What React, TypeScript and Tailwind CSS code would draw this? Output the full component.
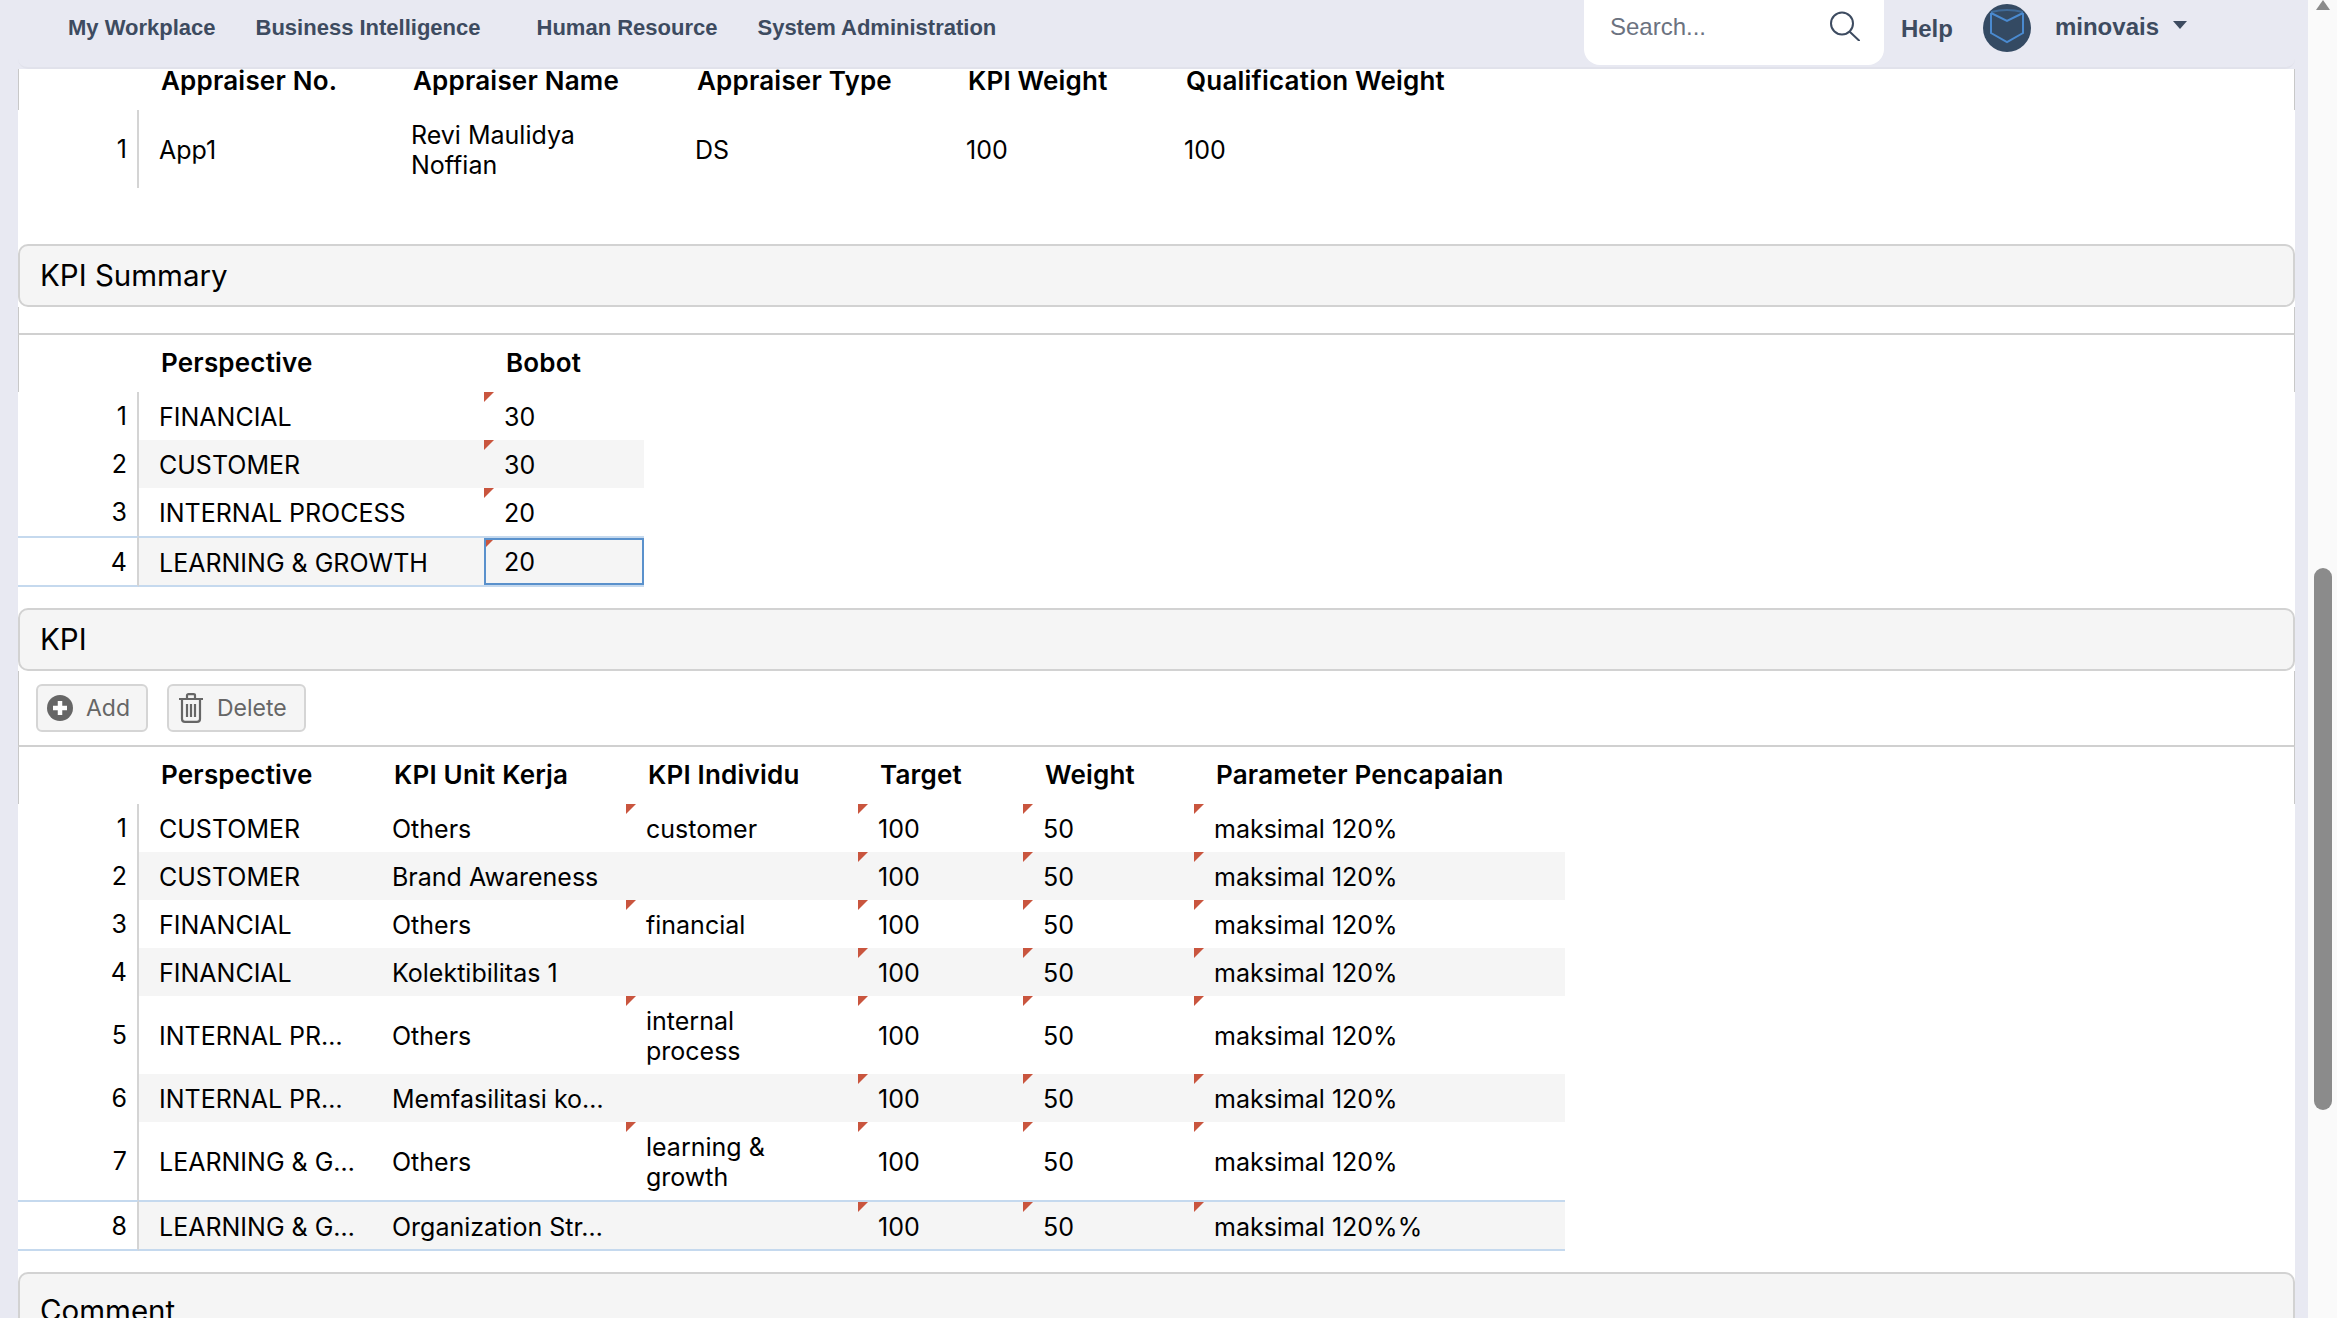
import clsx from "clsx";
import type { ReactNode } from "react";

const NAV = [
  { label: "My Workplace", gap: "ml-[50px]" },
  { label: "Business Intelligence", gap: "ml-[40px]" },
  { label: "Human Resource", gap: "ml-[56px]" },
  { label: "System Administration", gap: "ml-[40px]" },
];

const SUMMARY = [
  ["FINANCIAL", "30"],
  ["CUSTOMER", "30"],
  ["INTERNAL PROCESS", "20"],
  ["LEARNING & GROWTH", "20"],
];

const KPI = [
  ["CUSTOMER", "Others", "customer"],
  ["CUSTOMER", "Brand Awareness", ""],
  ["FINANCIAL", "Others", "financial"],
  ["FINANCIAL", "Kolektibilitas 1", ""],
  ["INTERNAL PR…", "Others", "internal process"],
  ["INTERNAL PR…", "Memfasilitasi ko…", ""],
  ["LEARNING & G…", "Others", "learning & growth"],
  ["LEARNING & G…", "Organization Str…", ""],
];

function Flag() {
  return (
    <span className="absolute left-0 top-0 h-0 w-0 border-r-[10px] border-t-[10px] border-r-transparent border-t-[#c9553e]" />
  );
}

function Bar({ title, className }: { title: string; className?: string }) {
  return (
    <div
      className={clsx(
        "flex h-[63px] items-center rounded-[10px] border-2 border-[#d2d2d2] bg-[#f5f5f5] pl-[20px] text-[29.5px] text-black",
        className,
      )}
    >
      {title}
    </div>
  );
}

function Th({ children, className }: { children?: ReactNode; className?: string }) {
  return (
    <th className={clsx("pb-[2px] pl-[22px] text-left text-[26px] font-semibold tracking-[0.2px] text-black", className)}>
      {children}
    </th>
  );
}

function RowNum({ n, selected }: { n: number; selected?: boolean }) {
  return (
    <td
      className={clsx(
        "border-r-2 border-r-[#d4d4d4] bg-white pr-[10px] pt-[2px] text-right",
        selected && "border-y-2 border-y-[#c5d9ee]",
      )}
    >
      {n}
    </td>
  );
}

function Td({
  children,
  flag,
  striped,
  selected,
}: {
  children?: ReactNode;
  flag?: boolean;
  striped?: boolean;
  selected?: boolean;
}) {
  return (
    <td
      className={clsx(
        "relative pl-[20px] pt-[2px] leading-[30px]",
        striped && "bg-[#f5f5f5]",
        selected && "border-y-2 border-y-[#c5d9ee]",
      )}
    >
      {flag && <Flag />}
      {children}
    </td>
  );
}

function NavBar() {
  return (
    <nav className="flex h-[69px] shrink-0 items-start rounded-b-[10px] border-b-2 border-[#e1e2eb] pr-[108px] font-['Liberation_Sans',sans-serif] text-[22px] font-bold text-[#3d4b60]">
      {NAV.map((item) => (
        <a key={item.label} className={clsx("mt-[13px] leading-[30px]", item.gap)}>
          {item.label}
        </a>
      ))}
      <div className="ml-auto flex h-[65px] w-[300px] items-start rounded-b-[16px] bg-white pl-[26px] pr-[24px]">
        <span className="mt-[12px] text-[24px] font-normal leading-[30px] text-[#6b7280]">
          Search...
        </span>
        <svg className="ml-auto mt-[11px]" width="30" height="30" viewBox="0 0 30 30" fill="none" stroke="#3d4b60" strokeWidth="2">
          <circle cx="12" cy="12.5" r="11" />
          <path d="M20 21 L29 29.5" strokeLinecap="round" />
        </svg>
      </div>
      <span className="ml-[17px] mt-[14px] text-[24px] leading-[30px]">Help</span>
      <svg className="ml-[30px] mt-[4px]" width="48" height="48" viewBox="0 0 48 48" fill="none">
        <circle cx="24" cy="24" r="24" fill="#344a63" />
        <path d="M8 8 Q24 4 40 8" stroke="#3f6a98" strokeWidth="2" />
        <path d="M8 9 L24 17 L40 9 M8 9 V29 L24 38 L40 29 V9" stroke="#4a8ad0" strokeWidth="2" />
      </svg>
      <span className="ml-[24px] mt-[12px] text-[24px] leading-[30px]">minovais</span>
      <span className="ml-[14px] mt-[21px] h-0 w-0 border-x-[7px] border-t-[8px] border-x-transparent border-t-[#3d4b60]" />
    </nav>
  );
}

function AppraiserTable() {
  return (
    <table className="w-full table-fixed border-separate border-spacing-0 text-[25px] text-black">
      <colgroup>
        <col className="w-[121px]" />
        <col className="w-[252px]" />
        <col className="w-[284px]" />
        <col className="w-[271px]" />
        <col className="w-[218px]" />
        <col className="w-[320px]" />
        <col />
      </colgroup>
      <thead>
        <tr className="h-[41px]">
          <Th className="border-l border-l-[#c8c8c8]" />
          <Th className="align-top leading-[24px]">Appraiser No.</Th>
          <Th className="align-top leading-[24px]">Appraiser Name</Th>
          <Th className="align-top leading-[24px]">Appraiser Type</Th>
          <Th className="align-top leading-[24px]">KPI Weight</Th>
          <Th className="align-top leading-[24px]">Qualification Weight</Th>
          <Th className="border-r border-r-[#c8c8c8]" />
        </tr>
      </thead>
      <tbody>
        <tr className="h-[78px]">
          <RowNum n={1} />
          <Td>App1</Td>
          <Td>
            <div className="w-[200px]">Revi Maulidya Noffian</div>
          </Td>
          <Td>DS</Td>
          <Td>100</Td>
          <Td>100</Td>
          <td />
        </tr>
      </tbody>
    </table>
  );
}

function SummaryTable() {
  return (
    <table className="w-full table-fixed border-separate border-spacing-0 text-[25px] text-black">
      <colgroup>
        <col className="w-[121px]" />
        <col className="w-[345px]" />
        <col className="w-[160px]" />
        <col />
      </colgroup>
      <thead>
        <tr className="h-[57px]">
          <Th className="border-l border-l-[#c8c8c8]" />
          <Th>Perspective</Th>
          <Th>Bobot</Th>
          <Th className="border-r border-r-[#c8c8c8]" />
        </tr>
      </thead>
      <tbody>
        {SUMMARY.map(([name, value], i) => {
          const selected = i === 3;
          const striped = i % 2 === 1;
          return (
            <tr key={name} className={selected ? "h-[51px]" : "h-[48px]"}>
              <RowNum n={i + 1} selected={selected} />
              <Td striped={striped} selected={selected}>
                {name}
              </Td>
              {selected ? (
                <td className="relative border-y-2 border-y-[#c5d9ee] bg-[#f5f5f5] pl-[20px] pt-[2px]">
                  <span className="absolute inset-0 border-2 border-[#5a91cc]" />
                  <span className="absolute left-[2px] top-[2px] h-0 w-0 border-r-[7px] border-t-[7px] border-r-transparent border-t-[#c9553e]" />
                  {value}
                </td>
              ) : (
                <Td flag striped={striped}>
                  {value}
                </Td>
              )}
              <td />
            </tr>
          );
        })}
      </tbody>
    </table>
  );
}

function KpiTable() {
  return (
    <table className="w-full table-fixed border-separate border-spacing-0 text-[25px] text-black">
      <colgroup>
        <col className="w-[121px]" />
        <col className="w-[233px]" />
        <col className="w-[254px]" />
        <col className="w-[232px]" />
        <col className="w-[165px]" />
        <col className="w-[171px]" />
        <col className="w-[371px]" />
        <col />
      </colgroup>
      <thead>
        <tr className="h-[57px]">
          <Th className="border-l border-l-[#c8c8c8]" />
          <Th>Perspective</Th>
          <Th>KPI Unit Kerja</Th>
          <Th>KPI Individu</Th>
          <Th>Target</Th>
          <Th>Weight</Th>
          <Th>Parameter Pencapaian</Th>
          <Th className="border-r border-r-[#c8c8c8]" />
        </tr>
      </thead>
      <tbody>
        {KPI.map(([perspective, unit, individu], i) => {
          const striped = i % 2 === 1;
          const selected = i === 7;
          const tall = individu.includes(" ");
          return (
            <tr key={i} className={tall ? "h-[78px]" : selected ? "h-[51px]" : "h-[48px]"}>
              <RowNum n={i + 1} selected={selected} />
              <Td striped={striped} selected={selected}>
                {perspective}
              </Td>
              <Td striped={striped} selected={selected}>
                {unit}
              </Td>
              <Td flag={i % 2 === 0} striped={striped} selected={selected}>
                <div className="w-[130px]">{individu}</div>
              </Td>
              <Td flag striped={striped} selected={selected}>
                100
              </Td>
              <Td flag striped={striped} selected={selected}>
                50
              </Td>
              <Td flag striped={striped} selected={selected}>
                {selected ? "maksimal 120%%" : "maksimal 120%"}
              </Td>
              <td />
            </tr>
          );
        })}
      </tbody>
    </table>
  );
}

function Toolbar() {
  return (
    <div className="flex h-[76px] items-start gap-[19px] border-x border-b-2 border-x-[#c8c8c8] border-b-[#d0d0d0] pl-[17px] pt-[13px] text-[23px] text-[#666]">
      <button className="flex h-[48px] w-[112px] items-center rounded-[6px] border-2 border-[#d5d5d5] bg-[#f5f5f5] pl-[9px]">
        <svg width="26" height="26" viewBox="0 0 26 26">
          <circle cx="13" cy="13" r="13" fill="#666" />
          <path d="M13 6 V20 M6 13 H20" stroke="#fff" strokeWidth="4.5" />
        </svg>
        <span className="ml-[13px]">Add</span>
      </button>
      <button className="flex h-[48px] w-[139px] items-center rounded-[6px] border-2 border-[#d5d5d5] bg-[#f5f5f5] pl-[9px]">
        <svg width="26" height="30" viewBox="0 0 26 30" fill="none" stroke="#666" strokeWidth="2.2">
          <path d="M1 6 H25 M9 6 V2.5 Q9 1.2 10.5 1.2 H15.5 Q17 1.2 17 2.5 V6" />
          <path d="M4 6 V26 Q4 28.8 7 28.8 H19 Q22 28.8 22 26 V6" />
          <path d="M9 11 V24 M13 11 V24 M17 11 V24" />
        </svg>
        <span className="ml-[13px]">Delete</span>
      </button>
    </div>
  );
}

export default function App() {
  return (
    <div className="flex h-[1318px] w-full overflow-hidden bg-[#e8e9f2] font-[Inter,sans-serif]">
      <main className="flex min-w-0 flex-1 flex-col overflow-hidden pl-[18px] pr-[13px]">
        <NavBar />
        <div className="flex-1 bg-white">
          <AppraiserTable />
          <Bar title="KPI Summary" className="mt-[56px]" />
          <div className="h-[28px] border-x border-b-2 border-x-[#c8c8c8] border-b-[#d0d0d0]" />
          <SummaryTable />
          <Bar title="KPI" className="mt-[21px]" />
          <Toolbar />
          <KpiTable />
          <Bar title="Comment" className="mt-[21px] h-[76px] leading-[20px]" />
        </div>
      </main>
      <aside className="w-[29px] shrink-0 bg-[#fafafa] pl-[6px]">
        <div className="ml-[2px] h-0 w-0 border-x-[7px] border-b-[10px] border-x-transparent border-b-[#8b8b8b]" />
        <div className="mt-[558px] h-[542px] w-[18px] rounded-full bg-[#8b8b8b]" />
      </aside>
    </div>
  );
}
